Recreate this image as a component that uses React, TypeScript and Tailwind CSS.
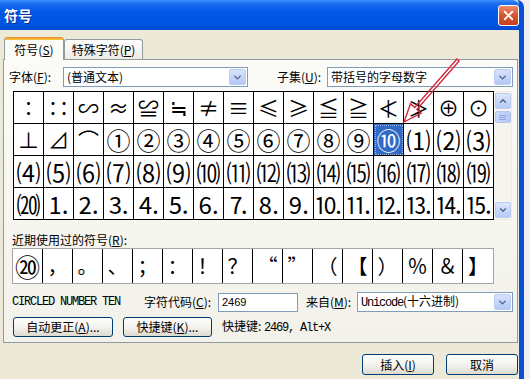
import { ChevronDown, ChevronUp, X } from 'lucide-react'

const rows = [
    ['∶', '∷', '∽', '≈', '≌', '≒', '≠', '≡', '≤', '≥', '≦', '≧', '≮', '≯', '⊕', '⊙'],
    ['⊥', '⊿', '⌒', '①', '②', '③', '④', '⑤', '⑥', '⑦', '⑧', '⑨', '⑩', '⑴', '⑵', '⑶'],
    ['⑷', '⑸', '⑹', '⑺', '⑻', '⑼', '⑽', '⑾', '⑿', '⒀', '⒁', '⒂', '⒃', '⒄', '⒅', '⒆'],
    ['⒇', '⒈', '⒉', '⒊', '⒋', '⒌', '⒍', '⒎', '⒏', '⒐', '⒑', '⒒', '⒓', '⒔', '⒕', '⒖'],
]

const recent = ['⑳', '，', '。', '、', '；', '：', '！', '？', '“', '”', '（', '【', '）', '％', '＆', '】']

function DropButton() {
    return (
        <div className="w-[17px] h-[16px] m-px flex items-center justify-center rounded-[2px] border border-[#BCCDF3] bg-gradient-to-b from-[#D8E3FC] to-[#B3C8F5]">
            <ChevronDown size={11} strokeWidth={3} className="text-[#4D6185]" />
        </div>
    )
}

function XpButton({ children, className }: { children: React.ReactNode; className: string }) {
    return (
        <div className={`h-[20px] flex items-center justify-center rounded-[3px] border border-[#003C74] bg-gradient-to-b from-white via-[#F4F3EE] to-[#DCDAD0] ${className}`}>
            {children}
        </div>
    )
}

export default function App() {
    return (
        <div className="relative w-[530px] h-[379px] overflow-hidden bg-[#EFEFEF] text-[12px] leading-[14px] text-black font-['Noto_Sans_CJK_SC',sans-serif]">
            <div className="w-[524px] h-full flex flex-col border-r-[5px] border-[#0A50D6] rounded-tr-[7px]">

                {/* Title bar */}
                <div className="h-[30px] flex items-center justify-between pl-[4px] rounded-tr-[6px] bg-[linear-gradient(to_bottom,#3D90FA_0%,#1C6EF0_12%,#0058E6_40%,#0054E2_80%,#0049CF_100%)]">
                    <span className="text-[14px] font-bold text-white [text-shadow:1px_1px_0_#0A2E8C]">符号</span>
                    <div className="w-[21px] h-[21px] flex items-center justify-center rounded-[3px] border border-white bg-gradient-to-b from-[#E98A6C] via-[#D75430] to-[#C2401C]">
                        <X size={15} strokeWidth={3} className="text-white" />
                    </div>
                </div>

                {/* Body */}
                <div className="flex-1 flex flex-col bg-[#ECE9D8] pl-[3px] pr-[1px] pt-[7px]">

                    {/* Tabs */}
                    <div className="h-[22px] flex items-end pl-[1px]">
                        <div className="relative z-10 -mb-px w-[60px] h-[23px] flex flex-col bg-[#FBFBF8] border-x border-[#919B9C] rounded-t-[3px] overflow-hidden">
                            <div className="h-[3px] bg-gradient-to-b from-[#E68B2C] to-[#FFC73C]" />
                            <div className="flex-1 flex items-center justify-center">符号(<u>S</u>)</div>
                        </div>
                        <div className="w-[79px] h-[20px] flex items-center justify-center border-x border-t border-[#919B9C] rounded-t-[3px] bg-gradient-to-b from-white to-[#ECEBE6]">
                            特殊字符(<u>P</u>)
                        </div>
                    </div>

                    {/* Panel */}
                    <div className="h-[284px] flex flex-col border border-[#919B9C] bg-gradient-to-b from-[#FBFBF8] to-[#F2F1EA]">

                        {/* Font / subset row */}
                        <div className="mt-[7px] h-[20px] flex items-center pl-[5px]">
                            <span className="w-[54px]">字体(<u>F</u>):</span>
                            <div className="w-[185px] h-[20px] flex items-center justify-between border border-[#7F9DB9] bg-white pl-[3px]">
                                <span>(普通文本)</span>
                                <DropButton />
                            </div>
                            <span className="ml-[29px] w-[50px]">子集(<u>U</u>):</span>
                            <div className="w-[186px] h-[20px] flex items-center justify-between border border-[#7F9DB9] bg-white pl-[3px]">
                                <span>带括号的字母数字</span>
                                <DropButton />
                            </div>
                        </div>

                        {/* Symbol grid */}
                        <div className="mt-[4px] ml-[9px] flex">
                            <div className="border-l border-t border-black">
                                {rows.map((row, r) => (
                                    <div key={r} className="flex">
                                        {row.map((s, c) => {
                                            const sel = r === 1 && c === 12
                                            const big = r > 0 && !(r === 1 && c < 3)
                                            return (
                                                <div
                                                    key={c}
                                                    className={`w-[30px] h-[32px] flex items-center justify-center border-r border-b border-black leading-none ${big ? 'text-[24px]' : 'text-[21px]'} ${sel ? 'bg-[#316AC5] text-white outline-1 outline-dotted outline-[#9CB7E6] -outline-offset-2' : 'bg-white'}`}
                                                >
                                                    {s}
                                                </div>
                                            )
                                        })}
                                    </div>
                                ))}
                            </div>

                            {/* Scrollbar */}
                            <div className="w-[18px] h-[129px] flex flex-col items-center bg-[#F5F4EF] border-y border-r border-[#EEEDE5] py-px">
                                <div className="w-[16px] h-[16px] flex items-center justify-center rounded-[2px] border border-[#BCCDF3] bg-gradient-to-b from-[#DCE6FC] to-[#B6CAF6]">
                                    <ChevronUp size={10} strokeWidth={3} className="text-[#4D6185]" />
                                </div>
                                <div className="mt-[2px] w-[16px] h-[12px] flex flex-col items-center justify-center gap-px rounded-[2px] border border-[#B3C5EF] bg-gradient-to-r from-[#C9D8FC] to-[#B5C9F6]">
                                    <div className="w-[7px] h-px bg-[#8CA5E0]" />
                                    <div className="w-[7px] h-px bg-[#8CA5E0]" />
                                    <div className="w-[7px] h-px bg-[#8CA5E0]" />
                                </div>
                                <div className="flex-1" />
                                <div className="w-[16px] h-[16px] flex items-center justify-center rounded-[2px] border border-[#BCCDF3] bg-gradient-to-b from-[#DCE6FC] to-[#B6CAF6]">
                                    <ChevronDown size={10} strokeWidth={3} className="text-[#4D6185]" />
                                </div>
                            </div>
                        </div>

                        {/* Recently used */}
                        <div className="mt-[13px] pl-[8px]">近期使用过的符号(<u>R</u>):</div>
                        <div className="mt-[1px] ml-[8px] w-[482px] h-[36px] flex border border-[#A5A5A0] bg-white">
                            {recent.map((s, i) => (
                                <div
                                    key={i}
                                    className={`w-[30px] h-full flex items-center justify-center leading-none ${i === 0 ? 'text-[25px]' : 'text-[20px]'} ${i < 15 ? 'border-r border-black' : ''}`}
                                >
                                    {s}
                                </div>
                            ))}
                        </div>

                        {/* Info row */}
                        <div className="mt-[8px] h-[20px] flex items-center pl-[8px]">
                            <span className="w-[132px] font-['Liberation_Mono',monospace] text-[12px] tracking-[-1.2px]">CIRCLED NUMBER TEN</span>
                            <span className="w-[74px]">字符代码(<u>C</u>):</span>
                            <div className="w-[80px] h-[19px] flex items-center border border-[#7F9DB9] bg-white pl-[3px] font-['Liberation_Sans',sans-serif] text-[11px]">
                                2469
                            </div>
                            <span className="ml-[8px] w-[51px]">来自(<u>M</u>):</span>
                            <div className="w-[156px] h-[20px] flex items-center justify-between border border-[#7F9DB9] bg-white pl-[3px]">
                                <span>
                                    <span className="font-['Liberation_Mono',monospace] text-[12px] tracking-[-1.2px]">Unicode</span>(十六进制)
                                </span>
                                <DropButton />
                            </div>
                        </div>

                        {/* Button row */}
                        <div className="mt-[5px] h-[20px] flex items-center pl-[9px]">
                            <XpButton className="w-[100px]">
                                自动更正(<u>A</u>)...
                            </XpButton>
                            <XpButton className="ml-[10px] w-[89px]">
                                快捷键(<u>K</u>)...
                            </XpButton>
                            <span className="ml-[10px]">
                                快捷键:{' '}
                                <span className="font-['Liberation_Mono',monospace] text-[12px] tracking-[-1.2px]">2469, Alt+X</span>
                            </span>
                        </div>
                    </div>

                    {/* Dialog buttons */}
                    <div className="mt-[11px] flex justify-end gap-[12px]">
                        <XpButton className="w-[72px] h-[21px]">
                            插入(<u>I</u>)
                        </XpButton>
                        <XpButton className="w-[72px] h-[21px]">
                            取消
                        </XpButton>
                    </div>
                </div>
            </div>

            {/* Red annotation arrow */}
            <svg className="absolute inset-0 pointer-events-none" width="530" height="379" viewBox="0 0 530 379">
                <polygon
                    points="404,122 421.1,113 416.9,109.4 459.1,61 456.9,59 414.7,107.4 410.5,103.8"
                    fill="none"
                    stroke="#D2283C"
                    strokeWidth="1.4"
                    strokeLinejoin="miter"
                />
            </svg>
        </div>
    )
}
